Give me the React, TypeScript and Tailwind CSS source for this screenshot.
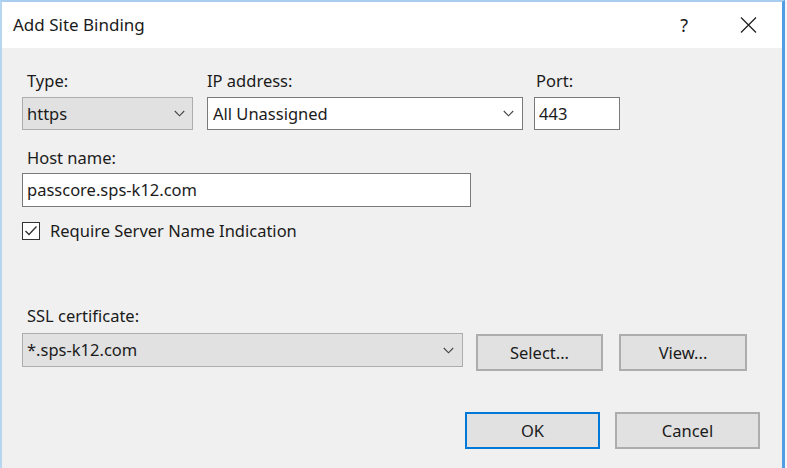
import React from 'react';

const Chevron = () => (
  <svg width="11" height="7" viewBox="0 0 11 7" className="shrink-0">
    <path d="M0.8 1 L5.5 5.8 L10.2 1" fill="none" stroke="#444" strokeWidth="1.1" />
  </svg>
);

export default function App() {
  return (
    <div className="w-[787px] h-[468px] flex bg-[#e9e9e9] font-['Noto_Sans',sans-serif] text-[16.5px] leading-[22px] text-[#1b1b1b] overflow-hidden">
      <div className="w-[785px] h-full flex flex-col border-l-2 border-t-2 border-r-[3px] border-l-[#b7d6f2] border-t-[#a9cdee] border-r-[#4f9de2]">
        {/* title bar */}
        <div className="h-[46px] bg-white flex items-center pl-[11px] pr-[25px] shrink-0">
          <span className="text-[17px] leading-[22px] flex-1">Add Site Binding</span>
          <span className="text-[18px] leading-[22px] mr-[52px]">?</span>
          <svg width="17" height="16" viewBox="0 0 17 16">
            <path d="M1 0.5 L16 15.5 M16 0.5 L1 15.5" stroke="#222" strokeWidth="1.3" />
          </svg>
        </div>

        {/* body */}
        <div className="flex-1 bg-[#f0f0f0] pl-[20px] pt-[22px] flex flex-col">
          {/* row: type / ip / port */}
          <div className="flex items-start">
            <div className="w-[171px] flex flex-col">
              <span className="pl-[5px]">Type:</span>
              <div className="mt-[5px] h-[33px] bg-[#e1e1e1] border border-[#adadad] flex items-center pl-[4px] pr-[7px]">
                <span className="flex-1">https</span>
                <Chevron />
              </div>
            </div>
            <div className="w-[316px] ml-[14px] flex flex-col">
              <span>IP address:</span>
              <div className="mt-[5px] h-[33px] bg-white border border-[#7a7a7a] flex items-center pl-[5px] pr-[8px]">
                <span className="flex-1">All Unassigned</span>
                <Chevron />
              </div>
            </div>
            <div className="w-[86px] ml-[11px] flex flex-col">
              <span className="pl-[2px]">Port:</span>
              <div className="mt-[5px] h-[33px] bg-white border border-[#7a7a7a] flex items-center pl-[4px]">
                443
              </div>
            </div>
          </div>

          {/* host name */}
          <span className="mt-[17px] pl-[5px]">Host name:</span>
          <div className="mt-[4px] w-[449px] h-[34px] bg-white border border-[#7a7a7a] flex items-center pl-[4px]">
            passcore.sps-k12.com
          </div>

          {/* SNI checkbox */}
          <div className="mt-[13px] flex items-center">
            <div className="w-[18px] h-[18px] border border-[#333] bg-white flex items-center justify-center">
              <svg width="14" height="12" viewBox="0 0 14 12">
                <path d="M1.5 6 L5 9.5 L12.5 1.5" fill="none" stroke="#333" strokeWidth="1.4" />
              </svg>
            </div>
            <span className="ml-[10px]">Require Server Name Indication</span>
          </div>

          {/* SSL certificate */}
          <span className="mt-[63px] pl-[5px]">SSL certificate:</span>
          <div className="mt-[6px] flex items-start">
            <div className="w-[441px] h-[34px] bg-[#e1e1e1] border border-[#adadad] flex items-center pl-[4px] pr-[8px]">
              <span className="flex-1">*.sps-k12.com</span>
              <Chevron />
            </div>
            <button className="mt-[1px] ml-[13px] w-[127px] h-[37px] bg-[#e1e1e1] border-2 border-[#adadad]">
              Select...
            </button>
            <button className="mt-[1px] ml-[16px] w-[128px] h-[37px] bg-[#e1e1e1] border-2 border-[#adadad]">
              View...
            </button>
          </div>

          {/* OK / Cancel */}
          <div className="mt-[41px] flex justify-end pr-[22px]">
            <button className="w-[135px] h-[37px] bg-[#e1e1e1] border-2 border-[#0078d7]">OK</button>
            <button className="ml-[15px] w-[145px] h-[37px] bg-[#e1e1e1] border-2 border-[#adadad]">Cancel</button>
          </div>
        </div>
      </div>
      <div className="flex-1 bg-[#f5f5f5]" />
    </div>
  );
}
